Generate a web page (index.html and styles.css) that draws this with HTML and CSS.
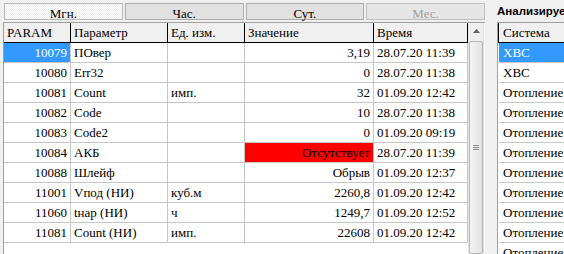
FILE: index.html
```html
<!DOCTYPE html>
<html>
<head>
<meta charset="utf-8">
<link rel="stylesheet" href="styles.css">
</head>
<body>
<div class="app">
  <div class="left">
    <div class="tabs">
      <div class="tab active">Мгн.</div>
      <div class="tab">Час.</div>
      <div class="tab">Сут.</div>
      <div class="tab disabled">Мес.</div>
    </div>
    <div class="gridwrap">
      <div class="table">
        <div class="hcell">PARAM</div><div class="hcell">Параметр</div><div class="hcell">Ед. изм.</div><div class="hcell">Значение</div><div class="hcell">Время</div>

        <div class="cell num sel">10079</div><div class="cell">ПОвер</div><div class="cell"></div><div class="cell num">3,19</div><div class="cell">28.07.20 11:39</div>
        <div class="cell num">10080</div><div class="cell">Err32</div><div class="cell"></div><div class="cell num">0</div><div class="cell">28.07.20 11:38</div>
        <div class="cell num">10081</div><div class="cell">Count</div><div class="cell">имп.</div><div class="cell num">32</div><div class="cell">01.09.20 12:42</div>
        <div class="cell num">10082</div><div class="cell">Code</div><div class="cell"></div><div class="cell num">10</div><div class="cell">28.07.20 11:38</div>
        <div class="cell num">10083</div><div class="cell">Code2</div><div class="cell"></div><div class="cell num">0</div><div class="cell">01.09.20 09:19</div>
        <div class="cell num">10084</div><div class="cell">АКБ</div><div class="cell"></div><div class="cell num alarm">Отсутствует</div><div class="cell">28.07.20 11:39</div>
        <div class="cell num">10088</div><div class="cell">Шлейф</div><div class="cell"></div><div class="cell num">Обрыв</div><div class="cell">01.09.20 12:37</div>
        <div class="cell num">11001</div><div class="cell">Vпод (НИ)</div><div class="cell">куб.м</div><div class="cell num">2260,8</div><div class="cell">01.09.20 12:42</div>
        <div class="cell num">11060</div><div class="cell">tнар (НИ)</div><div class="cell">ч</div><div class="cell num">1249,7</div><div class="cell">01.09.20 12:52</div>
        <div class="cell num">11081</div><div class="cell">Count (НИ)</div><div class="cell">имп.</div><div class="cell num">22608</div><div class="cell">01.09.20 12:42</div>
      </div>
      <div class="vscroll">
        <div class="sbtn">
          <svg width="7" height="4" viewBox="0 0 7 4"><path d="M0 4 L3.5 0 L7 4 Z" fill="#606060"/></svg>
        </div>
        <div class="thumb"><div class="grip"><span></span><span></span><span></span></div></div>
      </div>
    </div>
  </div>
  <div class="right">
    <div class="title">Анализируемые системы</div>
    <div class="rgrid">
      <div class="rhead">Система</div>
      <div class="rcell sel">ХВС</div>
      <div class="rcell">ХВС</div>
      <div class="rcell">Отопление</div>
      <div class="rcell">Отопление</div>
      <div class="rcell">Отопление</div>
      <div class="rcell">Отопление</div>
      <div class="rcell">Отопление</div>
      <div class="rcell">Отопление</div>
      <div class="rcell">Отопление</div>
      <div class="rcell">Отопление</div>
      <div class="rcell">Отопление</div>
    </div>
  </div>
</div>
</body>
</html>
```

FILE: styles.css
```css
* { box-sizing: border-box; }
html, body {
  margin: 0;
  padding: 0;
  width: 564px;
  height: 254px;
  overflow: hidden;
  background: #f0f0f0;
  font-family: "Liberation Serif", "Times New Roman", serif;
  font-size: 13px;
  color: #000;
}
.app {
  display: flex;
  align-items: flex-start;
  height: 254px;
}
.left {
  margin-left: 3px;
  width: 482px;
  display: flex;
  flex-direction: column;
}
.tabs {
  display: grid;
  grid-template-columns: repeat(4, 1fr);
  column-gap: 2px;
  margin: 3px 0 0 1px;
  height: 17px;
}
.tab {
  border: 1px solid #adadad;
  background: #e1e1e1;
  text-align: center;
  line-height: 17px;
  height: 17px;
  padding-top: 1px;
}
.tab.active {
  background: repeating-conic-gradient(#ffffff 0 25%, #ebebeb 0 50%) 0 0 / 2px 2px;
  border-color: #b8b8b8;
}
.tab.disabled {
  color: #a0a0a0;
  background: #e6e6e6;
  border-color: #bfbfbf;
}
.gridwrap {
  margin-top: 2px;
  display: flex;
  border-left: 1px solid #a0a0a0;
  border-top: 1px solid #a0a0a0;
  background: #ffffff;
  height: 232px;
}
.table {
  display: grid;
  grid-template-columns: 67px 97px 77px 129px 94px;
  grid-auto-rows: 20px;
  align-content: start;
  background: #fff;
}
.hcell {
  background: #f0f0f0;
  border-right: 1px solid #000;
  border-bottom: 1px solid #000;
  padding: 0 3px;
  line-height: 19px;
  white-space: nowrap;
  overflow: hidden;
}
.cell {
  border-right: 1px solid #c6c6c6;
  border-bottom: 1px solid #c6c6c6;
  padding: 0 3px 0 3px;
  line-height: 19px;
  white-space: nowrap;
  overflow: hidden;
}
.cell.num { text-align: right; padding-right: 3px; }
.cell.sel { background: #3399ff; color: #fff; }
.cell.alarm { background: #ff0000; }
.vscroll {
  width: 16px;
  display: flex;
  flex-direction: column;
  background: #f0f0f0;
  border-left: 1px solid #e6e6e6;
  border-right: 1px solid #dcdcdc;
}
.sbtn {
  height: 20px;
  display: flex;
  align-items: center;
  justify-content: center;
  padding-bottom: 2px;
}
.thumb {
  margin: 0 0 0 0;
  height: 240px;
  background: linear-gradient(to right, #f4f4f4, #e2e2e2);
  border: 1px solid #b6b6b6;
  border-radius: 2px;
  display: flex;
  align-items: center;
  justify-content: center;
  padding-top: 0;
}
.grip {
  display: flex;
  flex-direction: column;
  gap: 1px;
  margin-top: 0;
}
.grip span {
  display: block;
  width: 6px;
  height: 1px;
  background: #8a8a8a;
}
.right {
  margin-left: 12px;
  flex: 1;
  min-width: 0;
  display: flex;
  flex-direction: column;
}
.title {
  font-family: "Liberation Sans", Arial, sans-serif;
  font-weight: bold;
  font-size: 11.5px;
  height: 22px;
  line-height: 22px;
  white-space: nowrap;
  overflow: hidden;
  padding-left: 0;
}
.rgrid {
  border-left: 1px solid #a0a0a0;
  border-top: 1px solid #a0a0a0;
  background: #fff;
  height: 240px;
  display: grid;
  grid-auto-rows: 20px;
  align-content: start;
}
.rhead {
  background: #f0f0f0;
  border-left: 1px solid #000;
  border-bottom: 1px solid #000;
  line-height: 19px;
  padding-left: 4px;
}
.rcell {
  margin-left: 1px;
  border-bottom: 1px solid #c6c6c6;
  line-height: 19px;
  padding-left: 4px;
  white-space: nowrap;
}
.rcell.sel { background: #3399ff; color: #fff; }
```
